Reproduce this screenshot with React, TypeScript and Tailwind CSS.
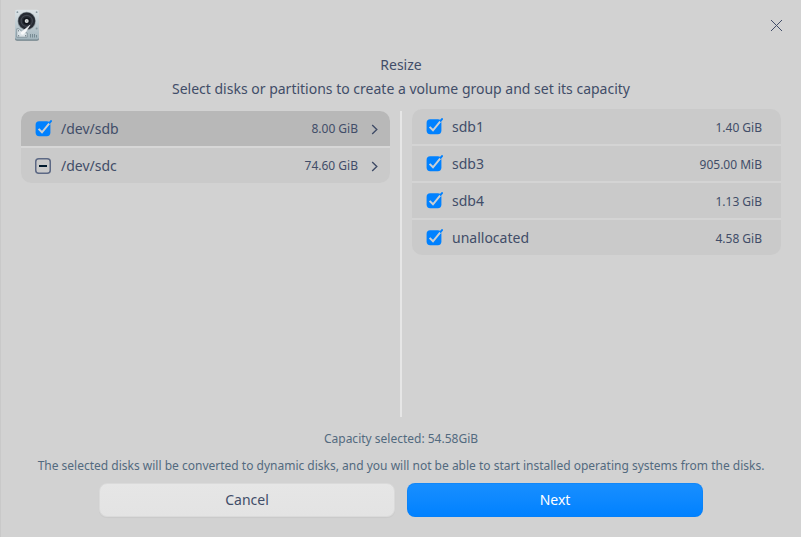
import React from "react";

type Disk = { name: string; size: string; state: "checked" | "partial"; selected?: boolean };
type Partition = { name: string; size: string };

const disks: Disk[] = [
  { name: "/dev/sdb", size: "8.00 GiB", state: "checked", selected: true },
  { name: "/dev/sdc", size: "74.60 GiB", state: "partial" },
];

const partitions: Partition[] = [
  { name: "sdb1", size: "1.40 GiB" },
  { name: "sdb3", size: "905.00 MiB" },
  { name: "sdb4", size: "1.13 GiB" },
  { name: "unallocated", size: "4.58 GiB" },
];

function DiskIcon() {
  return (
    <svg width="26" height="32" viewBox="0 0 26 32">
      <defs>
        <linearGradient id="case" x1="0" y1="0" x2="0" y2="1">
          <stop offset="0" stopColor="#dde4e7" />
          <stop offset="0.6" stopColor="#b9c7cd" />
          <stop offset="1" stopColor="#a3b5bd" />
        </linearGradient>
      </defs>
      <rect x="1" y="2" width="24" height="29.8" rx="2" fill="#6f8189" />
      <rect x="1" y="0.8" width="24" height="29.6" rx="2" fill="url(#case)" />
      <g fill="#8798a0">
        <circle cx="3.4" cy="3.2" r="0.9" />
        <circle cx="22.6" cy="3.2" r="0.9" />
        <circle cx="22.6" cy="19.6" r="1" />
      </g>
      <circle cx="12.7" cy="12" r="9.2" fill="#8d979e" />
      <circle cx="12.7" cy="11.9" r="8.5" fill="#252a32" />
      <circle cx="12.7" cy="11.9" r="5.6" fill="none" stroke="#424751" strokeWidth="1.2" />
      <circle cx="12.7" cy="12" r="3.6" fill="#11151c" />
      <circle cx="12.7" cy="12" r="2" fill="#d9dddd" />
      <circle cx="12.7" cy="12" r="0.7" fill="#a0a8aa" />
      <path d="M2.8 19.8 L5.2 19.8 L8.2 23 L13.2 24 L13.2 28.2 L2.8 28.2 Z" fill="#dbe3e7" stroke="#71828b" strokeWidth="0.7" />
      <path d="M15.9 16.2 L7.4 23 L9.2 25 L11.6 23.2 Z" fill="#f7f9fa" stroke="#f7f9fa" strokeWidth="0.5" />
      <circle cx="8.4" cy="24" r="1.7" fill="#f7f9fa" />
      <path d="M4 26.8h1.2M11 26.8h1.2M4 21.8h1" stroke="#596971" strokeWidth="1" />
      <path d="M16.5 25v3.5M18.5 25v3.5M20.5 25v3.5M22.5 26v2.5" stroke="#71848d" strokeWidth="0.9" />
    </svg>
  );
}

function CheckedBox() {
  return (
    <svg className="-mt-px shrink-0" width="18" height="18" viewBox="0 0 18 18">
      <rect x="1.6" y="2.3" width="14.8" height="14.9" rx="3.6" fill="#0081ff" />
      <path d="M4.6 9.9 L8 13.3 L15.3 4.4" fill="none" stroke="#cbcfd4" strokeWidth="2" />
      <path d="M15.7 3.7 L17 2.1" fill="none" stroke="#0081ff" strokeWidth="2" strokeLinecap="round" />
    </svg>
  );
}

function PartialBox() {
  return (
    <svg className="-mt-px shrink-0" width="18" height="18" viewBox="0 0 18 18">
      <rect x="1.75" y="2.75" width="14.5" height="14.5" rx="3" fill="none" stroke="#5c6884" strokeWidth="1.5" />
      <rect x="5" y="9" width="8" height="2" fill="#001a2e" />
    </svg>
  );
}

export default function App() {
  return (
    <div className="flex h-[537px] w-[801px] flex-col overflow-hidden border-l border-[#c9c9c9] bg-[#d2d2d2] font-['Noto_Sans',sans-serif] text-sm text-[#414d68]">
      <header className="flex h-[53px] items-start justify-between pt-[9px] pr-[18px] pl-[13px]">
        <DiskIcon />
        <button aria-label="Close" className="mt-[10px]">
          <svg width="13" height="13" viewBox="0 0 13 13">
            <path d="M1 1 L12 12 M12 1 L1 12" stroke="#414d68" strokeWidth="1" />
          </svg>
        </button>
      </header>
      <div className="text-center leading-6">
        <h1>Resize</h1>
        <p>Select disks or partitions to create a volume group and set its capacity</p>
      </div>
      <main className="flex h-[316px] pt-2 pl-5">
        <ul className="mt-[2px] flex h-[72px] w-[369px] flex-col gap-[2px] overflow-hidden rounded-[10px] bg-[#d7d7d7]">
          {disks.map((d) => (
            <li key={d.name} className={`flex h-[35px] items-center pr-[11px] pl-[13px] ${d.selected ? "bg-[#b8b8b8]" : "bg-[#cacaca]"}`}>
              {d.state === "checked" ? <CheckedBox /> : <PartialBox />}
              <span className="ml-[9px] flex-1">{d.name}</span>
              <span className="pt-px text-xs">{d.size}</span>
              <svg className="ml-[13px]" width="8" height="12" viewBox="0 0 8 12">
                <path d="M1.2 2 L5.8 6.5 L1.2 11" fill="none" stroke="#414d68" strokeWidth="1.4" />
              </svg>
            </li>
          ))}
        </ul>
        <div className="mt-[2px] ml-[10px] h-[306px] w-[2px] bg-[#e6e6e6]" />
        <ul className="ml-[10px] flex h-[146px] w-[369px] flex-col gap-[2px] overflow-hidden rounded-[10px] bg-[#d4d4d4]">
          {partitions.map((p) => (
            <li key={p.name} className="flex h-[35px] items-center bg-[#cacaca] pr-[19px] pl-[13px]">
              <CheckedBox />
              <span className="ml-[9px] flex-1">{p.name}</span>
              <span className="pt-[2px] text-xs">{p.size}</span>
            </li>
          ))}
        </ul>
      </main>
      <div className="pt-[14px] text-center text-xs text-[#526a7f]">
        <p className="h-[27px] leading-4">Capacity selected: 54.58GiB</p>
        <p className="h-[26px] leading-4">
          The selected disks will be converted to dynamic disks, and you will not be able to start installed operating systems from the disks.
        </p>
      </div>
      <footer className="-mt-px flex gap-3 pl-[98px]">
        <button className="h-[34px] w-[296px] rounded-lg border border-[#dadada] bg-linear-to-b from-[#e6e6e6] to-[#e3e3e3] shadow-[0_1px_1px_rgba(0,0,0,0.04)]">Cancel</button>
        <button className="h-[34px] w-[296px] rounded-lg border border-[#0a7df0]/40 bg-linear-to-b from-[#188fff] to-[#0081ff] bg-origin-border text-white">Next</button>
      </footer>
    </div>
  );
}
